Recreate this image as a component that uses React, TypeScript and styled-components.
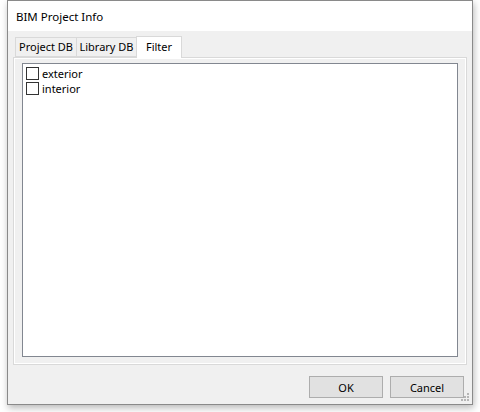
import React from "react";
import styled, { createGlobalStyle } from "styled-components";

const Global = createGlobalStyle`
  html, body { margin: 0; padding: 0; background: #ffffff; }
  body { font-family: "Noto Sans", "Liberation Sans", sans-serif; font-size: 11px; color: #000; }
`;

const Stage = styled.div`
  width: 480px;
  height: 412px;
  padding-left: 7px;
  box-sizing: border-box;
  overflow: hidden;
`;

const Window = styled.div`
  width: 466px;
  height: 405px;
  box-sizing: border-box;
  border: 1px solid #8a8a8a;
  background: #f0f0f0;
  display: flex;
  flex-direction: column;
  box-shadow: 1px 3px 7px rgba(0, 0, 0, 0.28);
`;

const TitleBar = styled.div`
  height: 30px;
  background: #ffffff;
  display: flex;
  align-items: center;
  padding-left: 8px;
  font-size: 11.5px;
  color: #000;
`;

const Body = styled.div`
  flex: 1;
  display: flex;
  flex-direction: column;
  padding: 5px 5px 6px 5px;
`;

const TabBar = styled.div`
  display: flex;
  align-items: flex-end;
  height: 21px;
  padding-left: 2px;
  position: relative;
  z-index: 1;
`;

const Tab = styled.div<{ $active?: boolean; $w: number }>`
  box-sizing: border-box;
  width: ${(p) => p.$w}px;
  height: ${(p) => (p.$active ? 22 : 20)}px;
  margin-bottom: ${(p) => (p.$active ? "-1px" : "0")};
  border: 1px solid #d9d9d9;
  border-bottom: ${(p) => (p.$active ? "none" : "1px solid #d9d9d9")};
  background: ${(p) => (p.$active ? "#ffffff" : "#f0f0f0")};
  display: flex;
  align-items: center;
  justify-content: center;
  white-space: nowrap;
  padding-bottom: ${(p) => (p.$active ? 3 : 1)}px;
  font-size: 11px;
  color: #000;
  & + & { margin-left: -1px; }
`;

const Pane = styled.div`
  box-sizing: border-box;
  height: 308px;
  border: 1px solid #d9d9d9;
  box-shadow: inset 1px 1px 0 #ffffff, inset -1px -1px 0 #ffffff;
  padding: 5px 8px 7px 8px;
  display: flex;
`;

const ListBox = styled.div`
  flex: 1;
  border: 1px solid #828790;
  background: #ffffff;
  padding: 2px 3px;
  display: flex;
  flex-direction: column;
`;

const Item = styled.label`
  display: flex;
  align-items: center;
  height: 15px;
  gap: 3px;
  font-size: 11px;
  color: #000;
`;

const Box = styled.span`
  box-sizing: border-box;
  width: 13px;
  height: 13px;
  border: 1px solid #333333;
  background: #ffffff;
  flex: none;
`;

const Footer = styled.div`
  flex: 1;
  display: flex;
  justify-content: flex-end;
  align-items: flex-end;
  gap: 7px;
  padding-right: 3px;
  position: relative;
`;

const Button = styled.button`
  box-sizing: border-box;
  width: 74px;
  height: 22px;
  border: 1px solid #adadad;
  background: #e1e1e1;
  font-family: "Noto Sans", "Liberation Sans", sans-serif;
  font-size: 11px;
  color: #000;
  padding: 0;
`;

const Grip = styled.svg`
  position: absolute;
  right: -3px;
  bottom: -4px;
`;

export default function App() {
  const dots: [number, number][] = [
    [6, 0],
    [3, 3], [6, 3],
    [0, 6], [3, 6], [6, 6],
  ];
  return (
    <>
      <Global />
      <Stage>
        <Window>
          <TitleBar>BIM Project Info</TitleBar>
          <Body>
            <TabBar>
              <Tab $w={62}>Project DB</Tab>
              <Tab $w={61}>Library DB</Tab>
              <Tab $w={46} $active>Filter</Tab>
            </TabBar>
            <Pane>
              <ListBox>
                <Item><Box />exterior</Item>
                <Item><Box />interior</Item>
              </ListBox>
            </Pane>
            <Footer>
              <Button>OK</Button>
              <Button>Cancel</Button>
              <Grip width="9" height="9" viewBox="0 0 9 9">
                {dots.map(([x, y], i) => (
                  <rect key={i} x={x} y={y} width="2" height="2" fill="#b5b5b5" />
                ))}
              </Grip>
            </Footer>
          </Body>
        </Window>
      </Stage>
    </>
  );
}
